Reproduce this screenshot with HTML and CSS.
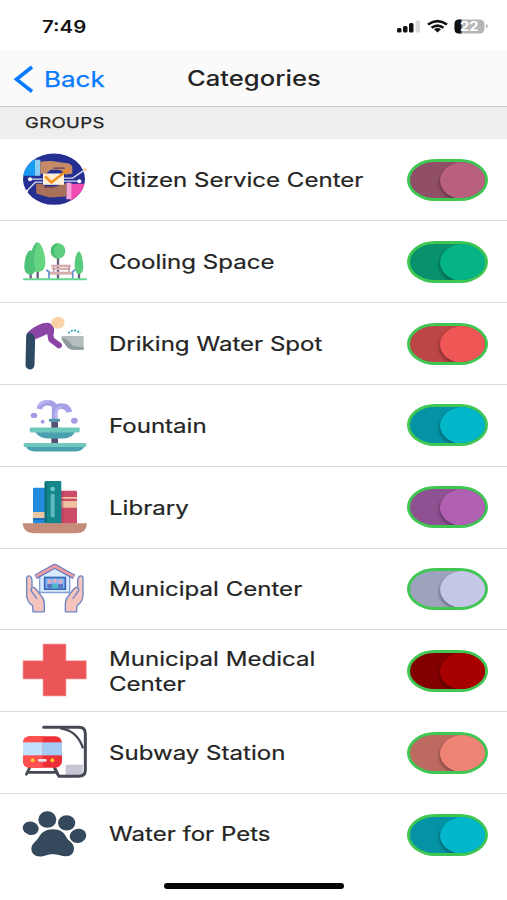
FILE: index.html
```html
<!DOCTYPE html>
<html lang="en">
<head>
<meta charset="utf-8">
<title>Categories</title>
<link rel="stylesheet" href="styles.css">
</head>
<body>
<div class="status">
  <span class="time">7:49</span>
  <svg class="indicators" viewBox="0 0 96 20" width="96" height="20">
    <g fill="#111"><rect x="2" y="11" width="4.500" height="4.500" rx="1.500"/><rect x="8" y="9" width="4.500" height="6.500" rx="1.500"/><rect x="14" y="6" width="4.500" height="9.500" rx="1.500"/></g>
    <rect x="20.500" y="3.500" width="4.500" height="12" rx="1.500" fill="#dadada"/>
    <g fill="none" stroke="#111" stroke-width="2.600"><path d="M33 7.500Q42.500 0.800 52 7.500M36.500 10.800Q42.500 6.300 48.500 10.800"/></g>
    <path d="M39 12.300Q42.500 9.800 46 12.300L42.500 15.500Z" fill="#111"/>
    <rect x="59.500" y="2.500" width="30" height="14" rx="4.500" fill="#b6b6b6"/>
    <path d="M66.500 2.500H64Q59.500 2.500 59.500 7V12Q59.500 16.500 64 16.500H66.500Z" fill="#111"/>
    <path d="M91 7Q95 9.200 91 11.500Z" fill="#b6b6b6"/>
    <text x="65" y="14" textLength="18.500" lengthAdjust="spacingAndGlyphs" class="charge">22</text>
  </svg>
</div>
<header class="nav">
  <svg class="chevron" viewBox="0 0 22 28" width="22" height="28"><path d="M20 2L4.500 14.300L20 26.500" fill="none" stroke="#087aff" stroke-width="3.600"/></svg>
  <span class="back">Back</span>
  <h1 class="title">Categories</h1>
</header>
<div class="section"><span class="section-label">GROUPS</span></div>
<main>
  <div class="row">
    <svg class="icon" viewBox="0 7.500 270 195">
      <clipPath id="disc"><ellipse cx="132" cy="104" rx="93" ry="77"/></clipPath>
      <g clip-path="url(#disc)">
        <path fill="#252f91" d="M30 20H240V190H30Z"/>
        <path fill="#199df3" d="M30 20H76V94H30Z"/><path fill="#8bcdf4" d="M75 46H91V94H75Z"/>
        <path fill="#c58a67" d="M91 52Q110 48 130 50L176 57Q187 61 187 71V88L166 91Q159 77 144 76H122L108 88H91Z"/>
        <path fill="#f24bb0" d="M182 118H240V190H182Z"/><path fill="#f6a4d8" d="M169 115H184V164H169Z"/>
        <path fill="#a86f59" d="M78 118H95L106 126H139L158 117H169V156L118 159L79 147Z"/>
      </g>
      <path d="M99 87H162V121H99Z" fill="#fff1d8"/>
      <path d="M104 88L128 109L162 87" fill="none" stroke="#ffc77a" stroke-width="3"/>
      <path d="M105 96L124 114L176 74" fill="none" stroke="#f58b13" stroke-width="7"/>
      <path d="M131 71H164M103 128H132" stroke="#653a55" stroke-width="4"/>
      <g fill="none" stroke="#d8ddf0" stroke-width="4"><path d="M60 104H98M162 101H188L224 76M98 113H76L50 140M162 110H207"/></g>
      <g fill="#fff"><circle cx="60" cy="104" r="6"/><circle cx="208" cy="110" r="6"/><circle cx="50" cy="140" r="4"/></g><circle cx="225" cy="75" r="5" fill="#ffd7a5"/>
    </svg>
    <span class="label">Citizen Service Center</span><span class="toggle plum"><i></i></span>
  </div>
  <div class="row">
    <svg class="icon" viewBox="0 -2 270 195">
      <path d="M62 105V147M83 95V147M144 75V147M207 115V147" stroke="#665d80" stroke-width="7"/>
      <path d="M62 62C48 64 42 96 43 116Q45 135 62 135Q75 134 77 116C79 91 73 64 62 62Z" fill="#4fc279"/>
      <path d="M83 38C68 42 60 77 62 103Q65 127 83 127Q104 126 106 103C107 77 97 42 83 38Z" fill="#66d582"/>
      <path d="M83 38C68 42 60 77 62 103Q64 122 77 126C68 91 74 62 83 38Z" fill="#4fc279"/>
      <ellipse cx="144" cy="64" rx="22" ry="23" fill="#5fd080"/><path d="M144 41C116 42 115 83 144 87C127 73 130 56 144 41Z" fill="#4abd75"/>
      <path d="M207 65C197 70 193 94 194 112Q195 133 207 133Q219 133 220 113C219 91 215 70 207 65Z" fill="#58ca7c"/>
      <g fill="#d7adae"><rect x="124" y="105" width="58" height="8"/><rect x="127" y="115" width="53" height="6"/><rect x="116" y="126" width="74" height="9"/></g>
      <path d="M109 121L117 127V147M194 120L188 127V147" fill="none" stroke="#5e8fce" stroke-width="5"/>
      <path d="M131 112V126M177 112V126" stroke="#b58d9c" stroke-width="4"/>
      <path d="M42 149H228" stroke="#68d58c" stroke-width="6" stroke-linecap="round"/>
    </svg>
    <span class="label">Cooling Space</span><span class="toggle green"><i></i></span>
  </div>
  <div class="row">
    <svg class="icon" viewBox="0 3 270 195">
      <path d="M62 78L60 165" stroke="#2d4963" stroke-width="27" stroke-linecap="round"/>
      <path d="M118 58L124 89L147 106" fill="none" stroke="#8b46a5" stroke-width="18" stroke-linecap="round" stroke-linejoin="round"/>
      <path d="M53 67Q72 49 98 40Q125 32 132 55L132 72L114 71L77 88Q72 70 53 67Z" fill="#8b46a5"/>
      <ellipse cx="144" cy="38" rx="20" ry="18" fill="#fbd2a7"/>
      <path d="M155 78H221V119H190Q177 119 168 107L155 86Z" fill="#b6bdbf"/><path d="M155 83Q174 85 187 106Q192 112 221 111V119H190Q177 119 168 107L155 88Z" fill="#8f9b9f"/>
      <path d="M175 70Q192 52 211 70" fill="none" stroke="#29a6b2" stroke-width="5" stroke-dasharray="6 4"/>
    </svg>
    <span class="label">Driking Water Spot</span><span class="toggle red"><i></i></span>
  </div>
  <div class="row">
    <svg class="icon" viewBox="0 2.700 270 195">
      <path d="M134 85V43Q128 31 109 32Q91 34 88 51M134 58Q137 42 153 42Q174 42 178 60" fill="none" stroke="#a6a0e7" stroke-width="17"/>
      <path d="M138 82V57Q143 46 155 45M84 43Q99 25 117 28" fill="none" stroke="#bbb5f2" stroke-width="7"/>
      <g fill="#a49ce6"><ellipse cx="72" cy="70" rx="10" ry="8"/><ellipse cx="193" cy="86" rx="10" ry="9"/><circle cx="98" cy="89" r="6"/></g>
      <path d="M124 88H144V108H124ZM124 136H144V154H124Z" fill="#555176"/><rect x="117" y="80" width="33" height="9" rx="2" fill="#4b96a9"/>
      <path d="M74 115H196Q190 138 159 139H111Q83 137 74 115Z" fill="#4ba0af"/><rect x="59" y="106" width="150" height="15" rx="4" fill="#70c7bc"/>
      <path d="M46 159H225Q218 178 198 178H75Q51 178 46 159Z" fill="#4ba0af"/><rect x="41" y="153" width="188" height="12" rx="4" fill="#70c7bc"/>
    </svg>
    <span class="label">Fountain</span><span class="toggle cyan"><i></i></span>
  </div>
  <div class="row">
    <svg class="icon" viewBox="0 2 270 195">
      <rect x="69" y="40" width="36" height="108" rx="4" fill="#238bdc"/><path d="M69 113H105V131H69Z" fill="#e9c69f"/><path d="M69 132H105V137H69Z" fill="#176cb5"/>
      <rect x="150" y="49" width="51" height="99" rx="4" fill="#cc4b66"/><path d="M150 80H201V100H150ZM150 68H201V73H150Z" fill="#efc29f"/><path d="M150 52H160V146H150Z" fill="#a93b5c" opacity=".5"/>
      <rect x="104" y="20" width="50" height="128" rx="4" fill="#15868c"/><path d="M104 24H111V144H104Z" fill="#0f6e78"/><circle cx="128" cy="44" r="7" fill="#6fc9cf"/><rect x="122" y="59" width="12" height="70" rx="3" fill="#62bac1"/>
      <path d="M38 147H231Q229 177 198 177H72Q40 176 38 147Z" fill="#c58c7a"/>
    </svg>
    <span class="label">Library</span><span class="toggle violet"><i></i></span>
  </div>
  <div class="row">
    <svg class="icon" viewBox="0 1.500 270 195">
      <path d="M89 62L134 34L179 62V111H89Z" fill="#d8eafd" stroke="#849fd8" stroke-width="4"/>
      <path d="M77 64L134 32L192 64" fill="none" stroke="#5375c2" stroke-width="15" stroke-linejoin="round"/><path d="M78 63L134 32L191 63" fill="none" stroke="#ec9ba2" stroke-width="9"/>
      <rect x="104" y="66" width="62" height="35" fill="#80b7f2" stroke="#3864b4" stroke-width="5"/>
      <g fill="#e6aab9"><circle cx="119" cy="78" r="6"/><circle cx="135" cy="76" r="6"/><circle cx="151" cy="78" r="6"/></g><path d="M112 97V86H126V97M144 97V86H159V97" fill="#596fb9"/><path d="M127 99V86H143V99Z" fill="#46b9c6"/>
      <g fill="#f5c4bd" stroke="#6a84c6" stroke-width="4" stroke-linejoin="round"><path d="M69 169L68 151Q50 137 50 120V68Q51 60 58 61Q65 63 66 75V96Q72 94 79 102L96 124Q103 132 103 148V169Z"/><path d="M66 97Q59 103 67 111L81 130" fill="none"/></g>
      <g transform="translate(269 0) scale(-1 1)" fill="#f5c4bd" stroke="#6a84c6" stroke-width="4" stroke-linejoin="round"><path d="M69 169L68 151Q50 137 50 120V68Q51 60 58 61Q65 63 66 75V96Q72 94 79 102L96 124Q103 132 103 148V169Z"/><path d="M66 97Q59 103 67 111L81 130" fill="none"/></g>
    </svg>
    <span class="label">Municipal Center</span><span class="toggle lavender"><i></i></span>
  </div>
  <div class="row">
    <svg class="icon" viewBox="0 1 270 195"><path d="M99 19H168V69H229V124H168V175H99V124H39V69H99Z" fill="#ec5558" stroke="#f8a5a5" stroke-width="2"/></svg>
    <span class="label">Municipal Medical<br>Center</span><span class="toggle crimson"><i></i></span>
  </div>
  <div class="row">
    <svg class="icon" viewBox="0 0 270 195">
      <path d="M167 134H218V166H167Z" fill="#c8c5d5"/>
      <path d="M101 22H207Q226 22 226 41V151Q226 169 205 169H147L136 148" fill="none" stroke="#454855" stroke-width="9" stroke-linecap="round"/><path d="M151 25Q202 31 219 85" fill="none" stroke="#454855" stroke-width="7"/>
      <path d="M59 143L49 163M133 143L143 163M52 157H139" stroke="#454855" stroke-width="8" stroke-linecap="round"/>
      <rect x="39" y="49" width="117" height="94" rx="20" fill="#ed3036"/><path d="M39 68Q40 49 60 49H98V143H59Q39 143 39 124Z" fill="#ff4f4f"/>
      <path d="M39 67H98V106H39Z" fill="#c3e2ff"/><path d="M98 67H156V106H98Z" fill="#a5cbf5"/>
      <rect x="84" y="117" width="26" height="8" rx="4" fill="#e4e2ef"/><g fill="#ffc52f"><circle cx="68" cy="121" r="6"/><circle cx="127" cy="121" r="6"/></g>
    </svg>
    <span class="label">Subway Station</span><span class="toggle salmon"><i></i></span>
  </div>
  <div class="row last">
    <svg class="icon" viewBox="0 5.400 270 195"><g fill="#34495b"><ellipse cx="62" cy="84" rx="24" ry="20" transform="rotate(15 62 84)"/><ellipse cx="112" cy="58" rx="27" ry="25"/><ellipse cx="170" cy="68" rx="26" ry="23"/><ellipse cx="204" cy="107" rx="25" ry="21" transform="rotate(-12 204 107)"/><path d="M128 87C151 87 163 97 170 113C175 123 192 128 192 146Q190 170 166 168C148 166 144 162 128 162C111 162 107 168 90 169Q64 168 64 145C65 129 80 123 86 112C94 96 108 87 128 87Z"/></g></svg>
    <span class="label">Water for Pets</span><span class="toggle cyan"><i></i></span>
  </div>
</main>
<div class="home-bar"></div>
</body>
</html>
```
FILE: styles.css
```css
* { box-sizing: border-box; }
body { margin: 0; width: 507px; height: 900px; overflow: hidden; background: #fff; color: #242424; font-family: Inter, "Liberation Sans", sans-serif; display: flex; flex-direction: column; }
.status { height: 50px; flex: none; display: flex; justify-content: space-between; padding: 17px 16px 0 42px; }
.time { font-size: 17px; line-height: 20px; font-weight: 600; color: #111; transform: scaleX(1.2); transform-origin: left; }
.indicators { display: block; }
.charge { font-size: 13px; font-weight: 700; fill: #fff; }
.nav { height: 57px; flex: none; display: grid; grid-template-columns: 32px 1fr 134px 1fr 44px; align-items: center; padding: 1px 0 0 12px; background: #fafafa; border-bottom: 1px solid #c8c8c8; }
.back, .title, .label, .section-label { transform-origin: left center; white-space: nowrap; }
.back { color: #087aff; font-size: 22px; -webkit-text-stroke: .25px; transform: scaleX(1.18); justify-self: start; }
.title { margin: 0; font-size: 21px; font-weight: 500; transform: scaleX(1.22); justify-self: start; }
.section { height: 32px; flex: none; display: flex; align-items: center; padding: 0 0 1px 25px; background: #eee; }
.section-label { font-size: 15px; letter-spacing: .3px; -webkit-text-stroke: .25px; transform: scaleX(1.235); }
main { flex: none; padding-top: .6px; }
.row { height: 81.8px; display: grid; grid-template-columns: 90px 289px 81px; column-gap: 9px; align-items: center; padding-left: 10px; border-bottom: 1px solid #d9d9d9; }
.last { border-bottom: 0; }
.icon { width: 90px; height: 65px; display: block; }
.label { font-size: 20px; line-height: 25px; -webkit-text-stroke: .2px; padding-top: 2px; transform: scaleX(1.203); justify-self: start; }
.last .label { padding-top: 0; }
.toggle { width: 81px; height: 42px; border: 3px solid #3fc653; border-radius: 28px / 21px; background: var(--track); overflow: hidden; display: flex; justify-content: flex-end; }
.toggle i { width: 46px; height: 37px; margin-right: -1px; border-radius: 50%; background: var(--thumb); box-shadow: -1px 2px 3px rgba(0,0,0,.3); }
.plum { --track: #914e67; --thumb: #b9607e; }
.green { --track: #07916d; --thumb: #05b486; }
.red { --track: #bc4545; --thumb: #ef5656; }
.cyan { --track: #0592a4; --thumb: #02b7ca; }
.violet { --track: #8e5191; --thumb: #b161b2; }
.lavender { --track: #9da2bd; --thumb: #c4c8e6; }
.crimson { --track: #830000; --thumb: #a80000; }
.salmon { --track: #bd6a61; --thumb: #ee8476; }
.home-bar { width: 180px; height: 6px; border-radius: 3px; background: #050505; margin: 7.400px auto 0 164px; flex: none; }
```
